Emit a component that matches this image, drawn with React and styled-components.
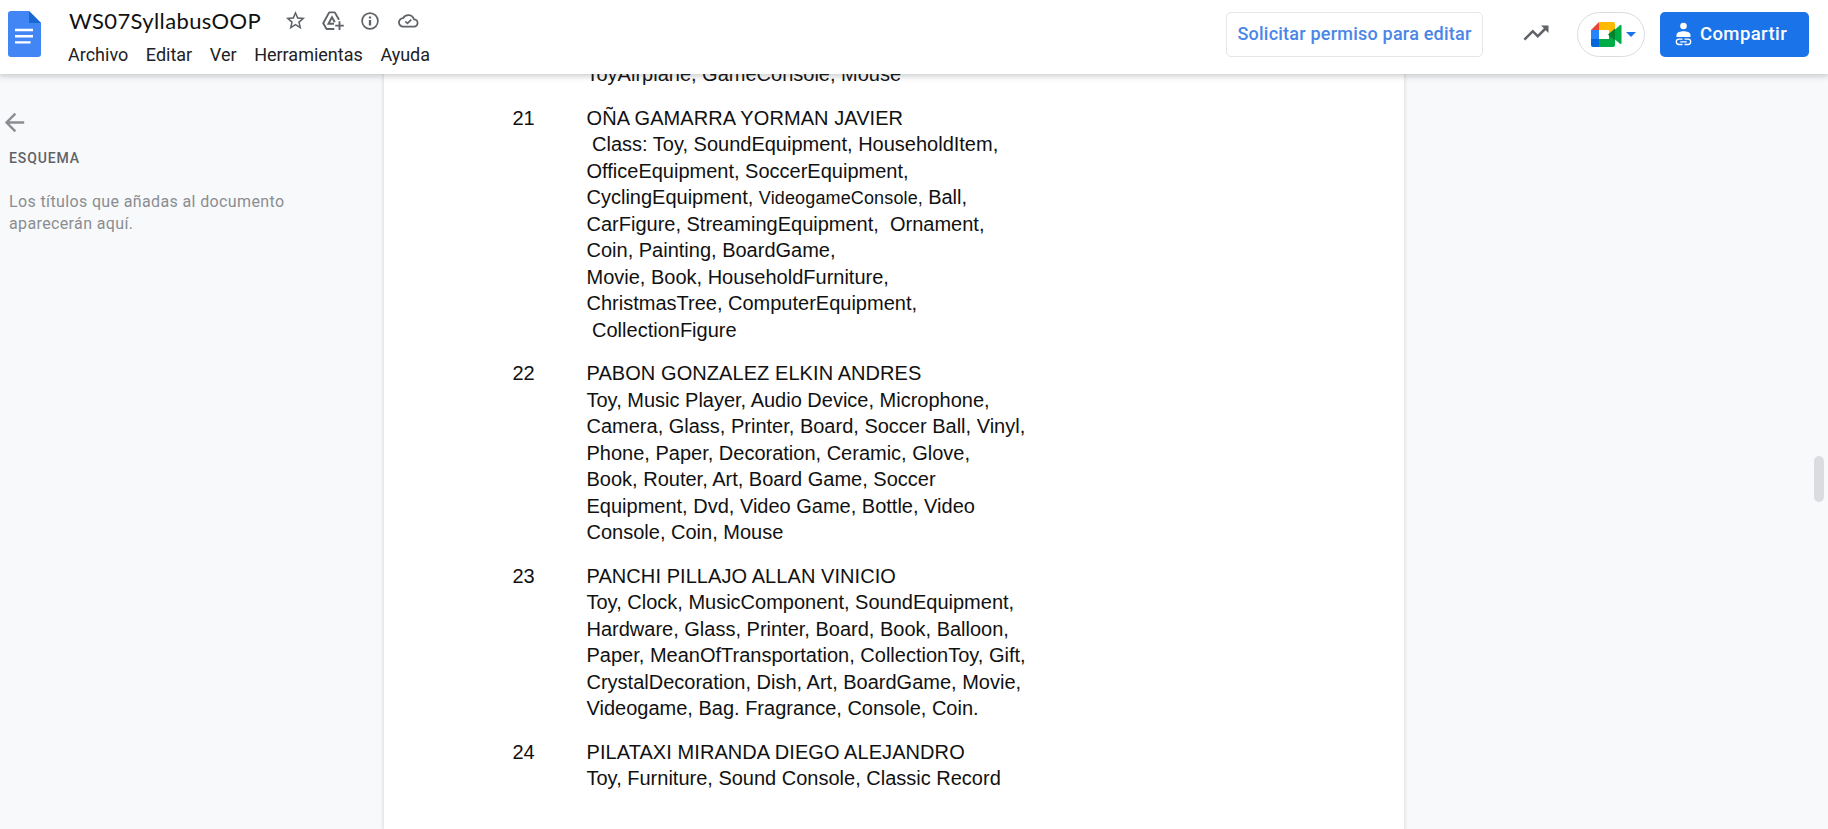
import React from "react";
import styled, { createGlobalStyle } from "styled-components";
import { MdStarBorder, MdTrendingUp, MdArrowBack } from "react-icons/md";

const Global = createGlobalStyle`
  * { box-sizing: border-box; }
  body { margin: 0; overflow: hidden; background: #f8f9fb; font-family: Roboto, "Liberation Sans", sans-serif; }
`;

const Page = styled.div`
  height: 829px;
  display: flex;
  flex-direction: column;
  overflow: hidden;
`;

const Header = styled.header`
  flex: none;
  position: relative;
  z-index: 1;
  height: 74px;
  display: flex;
  background: #fff;
  box-shadow: 0 1px 6px 1px rgba(60, 64, 67, 0.28);
`;

const Logo = styled.svg`
  flex: none;
  width: 33px;
  height: 46px;
  margin: 11px 0 0 8px;
`;

const Titles = styled.div`
  margin-left: 27px;
  flex: 1;
`;

const TitleRow = styled.div`
  display: flex;
  align-items: center;
  height: 32px;
  padding: 9px 0 0 1px;
  color: #5f6368;
`;

const Title = styled.h1`
  margin: 0;
  width: 215px;
  font: 400 22px/26px Lato, sans-serif;
  letter-spacing: 0.37px;
  color: #111;
  white-space: nowrap;
`;

const IconSlot = styled.span`
  display: flex;
  width: ${(p) => p.$w}px;
`;

const Menu = styled.nav`
  display: flex;
  gap: 17.6px;
  height: 42px;
  padding-top: 12px;
`;

const MenuItem = styled.span`
  font-size: 18px;
  line-height: 22px;
  color: #202124;
`;

const Actions = styled.div`
  display: flex;
  align-items: flex-start;
  padding: 12px 19px 0 0;
`;

const RequestButton = styled.button`
  width: 257px;
  height: 45px;
  padding: 0 0 1px;
  border: 1px solid #e4e6e9;
  border-radius: 5px;
  background: #fff;
  color: #4a86e8;
  font: 500 18px/24px Roboto, sans-serif;
  letter-spacing: 0.22px;
  white-space: nowrap;
`;

const Trend = styled(MdTrendingUp)`
  width: 30px;
  height: 30px;
  margin: 6px 26px 0 38px;
  color: #5f6368;
`;

const MeetButton = styled.button`
  display: flex;
  align-items: center;
  gap: 4px;
  width: 68px;
  height: 45px;
  padding: 0 0 0 13px;
  border: 1px solid #dadce0;
  border-radius: 23px;
  background: #fff;
`;

const Share = styled.button`
  display: flex;
  align-items: center;
  width: 149px;
  height: 45px;
  margin-left: 15px;
  padding: 0 0 2px 15px;
  gap: 8px;
  border: 0;
  border-radius: 5px;
  background: #1a73e8;
  color: #fff;
  font: 500 18.5px/24px Roboto, sans-serif;
  letter-spacing: 0.4px;
`;

const Body = styled.div`
  flex: 1;
  min-height: 0;
  display: flex;
`;

const Outline = styled.aside`
  width: 384px;
  padding: 34px 9px;
  color: #8a8d91;
`;

const Back = styled(MdArrowBack)`
  display: block;
  width: 29px;
  height: 29px;
  margin-left: -9px;
`;

const OutlineTitle = styled.h2`
  margin: 10px 0 0;
  font: 500 14px/22px Roboto, sans-serif;
  letter-spacing: 0.9px;
  color: #5f6368;
`;

const OutlineText = styled.p`
  margin: 22px 0 0;
  width: 300px;
  font-size: 16px;
  line-height: 22px;
  letter-spacing: 0.37px;
`;

const Paper = styled.main`
  width: 1020px;
  padding-left: 128.5px;
  background: #fff;
  box-shadow: 0 0 3px 1px rgba(60, 64, 67, 0.15);
  font-family: "Liberation Sans", Arial, sans-serif;
  font-size: 20px;
  line-height: 26.5px;
  color: #111;
`;

const Scrolled = styled.div`
  margin-top: -13px;
`;

const Entry = styled.section`
  display: grid;
  grid-template-columns: 74px 1fr;
  margin-bottom: 17.1px;
`;

const Line = styled.div`
  height: 26.5px;
  white-space: pre;
  letter-spacing: ${(p) => (p.$name ? "0.07px" : "normal")};
`;

const Small = styled.span`
  font-size: 18px;
  line-height: 1;
  letter-spacing: 0.14px;
`;

const Gutter = styled.div`
  flex: 1;
  display: flex;
  justify-content: flex-end;
  padding: 382px 4px 0 0;
`;

const Thumb = styled.div`
  width: 10px;
  height: 46px;
  border-radius: 5px;
  background: #dadce0;
`;

const ENTRIES = [
  { id: "", lines: ["ToyAirplane, GameConsole, Mouse"] },
  {
    id: "21",
    name: "OÑA GAMARRA YORMAN JAVIER",
    lines: [
      " Class: Toy, SoundEquipment, HouseholdItem,",
      "OfficeEquipment, SoccerEquipment,",
      <>CyclingEquipment, <Small>VideogameConsole, </Small>Ball,</>,
      "CarFigure, StreamingEquipment,  Ornament,",
      "Coin, Painting, BoardGame,",
      "Movie, Book, HouseholdFurniture,",
      "ChristmasTree, ComputerEquipment,",
      " CollectionFigure",
    ],
  },
  {
    id: "22",
    name: "PABON GONZALEZ ELKIN ANDRES",
    lines: [
      "Toy, Music Player, Audio Device, Microphone,",
      "Camera, Glass, Printer, Board, Soccer Ball, Vinyl,",
      "Phone, Paper, Decoration, Ceramic, Glove,",
      "Book, Router, Art, Board Game, Soccer",
      "Equipment, Dvd, Video Game, Bottle, Video",
      "Console, Coin, Mouse",
    ],
  },
  {
    id: "23",
    name: "PANCHI PILLAJO ALLAN VINICIO",
    lines: [
      "Toy, Clock, MusicComponent, SoundEquipment,",
      "Hardware, Glass, Printer, Board, Book, Balloon,",
      "Paper, MeanOfTransportation, CollectionToy, Gift,",
      "CrystalDecoration, Dish, Art, BoardGame, Movie,",
      "Videogame, Bag. Fragrance, Console, Coin.",
    ],
  },
  {
    id: "24",
    name: "PILATAXI MIRANDA DIEGO ALEJANDRO",
    lines: ["Toy, Furniture, Sound Console, Classic Record"],
  },
];

const DocsLogo = () => (
  <Logo viewBox="0 0 33 46">
    <path d="M3 0H21L33 12V43a3 3 0 0 1-3 3H3a3 3 0 0 1-3-3V3a3 3 0 0 1 3-3Z" fill="#4285f4" />
    <path d="M21 0L33 12H21Z" fill="#1967d2" />
    <path d="M7 19H25M7 25.200H25M7 31.400H22.600" stroke="#fff" strokeWidth="2.4" />
  </Logo>
);

const DriveAddIcon = () => (
  <svg width="22" height="20" viewBox="0 0 22 20" fill="none" stroke="currentColor" strokeWidth="1.9">
    <path d="M12.300 18H4.600L1.200 12.200 7.200 1.400H12.800L17 8.800" strokeLinejoin="round" />
    <path d="M12 12.800H6.400L10 6.200 12.800 11.200" />
    <path d="M17.500 10.300V19M13.200 14.600H21.800" />
  </svg>
);

const InfoIcon = () => (
  <svg width="18" height="18" viewBox="0 0 18 18" fill="none" stroke="currentColor">
    <circle cx="9" cy="9" r="7.900" strokeWidth="1.700" />
    <path d="M9 8V13.400M9 4.400V6.500" strokeWidth="2.300" />
  </svg>
);

const CloudIcon = () => (
  <svg width="21" height="15" viewBox="0 0 21 15" fill="none" stroke="currentColor" strokeWidth="1.800">
    <path d="M5.300 13.600A4.200 4.200 0 0 1 5 5.200 6 6 0 0 1 16 6.400 3.600 3.600 0 0 1 16 13.600Z" strokeLinejoin="round" />
    <path d="M7.300 8.300L9.500 10.400 13.300 6.600" strokeWidth="1.600" />
  </svg>
);

const MeetLogo = () => (
  <svg width="31" height="25" viewBox="0 0 31 25">
    <path d="M0 8L8 0V8Z" fill="#ea4335" />
    <path d="M8 0H22a2 2 0 0 1 2 2V9L18 13V8H8Z" fill="#ffba00" />
    <path d="M0 8H8V17H0Z" fill="#2684fc" />
    <path d="M0 17H8V25H2a2 2 0 0 1-2-2Z" fill="#0066da" />
    <path d="M8 17H18V12.500L24 7V23a2 2 0 0 1-2 2H8Z" fill="#00ac47" />
    <path d="M24 7.500L29 3.200Q30.500 2.200 30.500 4V21Q30.500 22.800 29 21.800L24 17.500Z" fill="#00ac47" />
    <path d="M17 12.500L24 6.500V18.500Z" fill="#00832d" />
  </svg>
);

const Caret = () => (
  <svg width="10" height="5" viewBox="0 0 10 5">
    <path d="M0 0H10L5 5Z" fill="#1a73e8" />
  </svg>
);

const ShareIcon = () => (
  <svg width="17" height="24" viewBox="0 0 17 24" fill="none">
    <circle cx="8.500" cy="4" r="3.300" fill="#fff" />
    <path d="M1.500 15V13C1.500 10.200 5.500 9.200 8.500 9.200S15.500 10.200 15.500 13V15Z" fill="#fff" />
    <path d="M7.500 17.100H4a2.700 2.700 0 0 0 0 5.400H7.500M9.500 17.100H13a2.700 2.700 0 0 1 0 5.400H9.500M5.200 19.800H11.800" stroke="#fff" strokeWidth="1.300" />
  </svg>
);

export default function App() {
  return (
    <Page>
      <Global />
      <Header>
        <DocsLogo />
        <Titles>
          <TitleRow>
            <Title>WS07SyllabusOOP</Title>
            <IconSlot $w={38}><MdStarBorder size={23} /></IconSlot>
            <IconSlot $w={39}><DriveAddIcon /></IconSlot>
            <IconSlot $w={37}><InfoIcon /></IconSlot>
            <IconSlot $w={24}><CloudIcon /></IconSlot>
          </TitleRow>
          <Menu>
            {["Archivo", "Editar", "Ver", "Herramientas", "Ayuda"].map((m) => (
              <MenuItem key={m}>{m}</MenuItem>
            ))}
          </Menu>
        </Titles>
        <Actions>
          <RequestButton>Solicitar permiso para editar</RequestButton>
          <Trend />
          <MeetButton>
            <MeetLogo />
            <Caret />
          </MeetButton>
          <Share>
            <ShareIcon />
            Compartir
          </Share>
        </Actions>
      </Header>
      <Body>
        <Outline>
          <Back />
          <OutlineTitle>ESQUEMA</OutlineTitle>
          <OutlineText>Los títulos que añadas al documento aparecerán aquí.</OutlineText>
        </Outline>
        <Paper>
          <Scrolled>
            {ENTRIES.map((e) => (
              <Entry key={e.id}>
                <div>{e.id}</div>
                <div>
                  {e.name && <Line $name>{e.name}</Line>}
                  {e.lines.map((l, i) => (
                    <Line key={i}>{l}</Line>
                  ))}
                </div>
              </Entry>
            ))}
          </Scrolled>
        </Paper>
        <Gutter>
          <Thumb />
        </Gutter>
      </Body>
    </Page>
  );
}
